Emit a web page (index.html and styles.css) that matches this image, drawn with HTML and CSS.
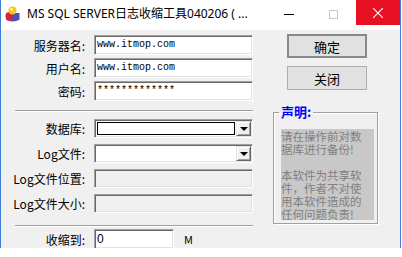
FILE: index.html
```html
<!DOCTYPE html>
<html lang="zh-CN">
<head>
  <meta charset="UTF-8">
  <title>MS SQL SERVER日志收缩工具</title>
  <link rel="stylesheet" href="styles.css">
</head>
<body>

<div class="window">
  <div class="titlebar">
    <svg class="app-icon" viewBox="0 0 17 17">
      <ellipse cx="8.5" cy="14" rx="6.5" ry="2.5" fill="#7a3f8f"/>
      <circle cx="5.5" cy="11" r="4" fill="#d8242a"/>
      <rect x="8.5" y="8" width="7" height="7" fill="#3d52c8"/>
      <circle cx="8.5" cy="5.5" r="4" fill="#f5c81c"/>
      <circle cx="7.5" cy="4.3" r="1.3" fill="#fff6b0"/>
    </svg>
    <span class="title">MS SQL SERVER日志收缩工具040206 ( ...</span>
    <span class="cap cap-min"><i></i></span>
    <span class="cap cap-max"><i></i></span>
    <span class="cap cap-close">
      <svg viewBox="0 0 10 10"><path d="M0 0L10 10M10 0L0 10" stroke="#fff" stroke-width="1.1"/></svg>
    </span>
  </div>

  <div class="client">
    <div class="form">
      <div class="row"><label>服务器名:</label><div class="edit">www.itmop.com</div></div>
      <div class="row"><label>用户名:</label><div class="edit">www.itmop.com</div></div>
      <div class="row"><label>密码:</label><div class="edit">*************</div></div>

      <div class="sep"></div>

      <div class="row row-sm">
        <label>数据库:</label>
        <div class="combo"><div class="face focus"></div><div class="drop"><b></b></div></div>
      </div>
      <div class="row row-sm">
        <label>Log文件:</label>
        <div class="combo"><div class="face"></div><div class="drop"><b></b></div></div>
      </div>
      <div class="row row-sm"><label>Log文件位置:</label><div class="edit disabled"></div></div>
      <div class="row row-sm"><label>Log文件大小:</label><div class="edit disabled"></div></div>

      <div class="sep sep-low"></div>

      <div class="row row-last">
        <label>收缩到:</label><div class="edit edit-short">0</div><span class="unit">M</span>
      </div>
    </div>

    <div class="side">
      <button class="btn btn-default">确定</button>
      <button class="btn">关闭</button>
      <fieldset class="group">
        <legend>声明:</legend>
        <div class="notice">
          <p>请在操作前对数</p>
          <p>据库进行备份!</p>
          <p class="gap">本软件为共享软</p>
          <p>件，作者不对使</p>
          <p>用本软件造成的</p>
          <p>任何问题负责!</p>
        </div>
      </fieldset>
    </div>
  </div>
</div>

</body>
</html>
```

FILE: styles.css
```css
body {
  margin: 0;
  background: #fff;
  font-family: "Noto Sans CJK SC", sans-serif;
  font-size: 12px;
  color: #000;
}

.window {
  width: 401px;
  height: 248px;
  box-sizing: border-box;
  border-left: 1px solid #3a7fd4;
  border-right: 1px solid #3a7fd4;
  overflow: hidden;
  display: flex;
  flex-direction: column;
}

/* title bar */
.titlebar {
  height: 30px;
  flex: none;
  background: #fff;
  display: flex;
  align-items: flex-start;
}

.app-icon {
  width: 17px;
  height: 17px;
  margin: 5px 0 0 3px;
}

.title {
  flex: 1;
  margin-left: 6px;
  font-family: "Noto Sans", "Noto Sans CJK SC", sans-serif;
  font-size: 12px;
  line-height: 28px;
  white-space: nowrap;
}

.cap {
  width: 45px;
  height: 25px;
  display: flex;
  align-items: center;
  justify-content: center;
}

.cap-min i {
  width: 10px;
  height: 1px;
  background: #000;
  margin-top: 3px;
}

.cap-max i {
  width: 9px;
  height: 9px;
  box-sizing: border-box;
  border: 1px solid #c8c8c8;
  margin-top: 3px;
}

.cap-close {
  width: 44px;
  background: #e81123;
}

.cap-close svg {
  width: 10px;
  height: 10px;
  margin-top: 1px;
}

/* client */
.client {
  flex: 1;
  background: #f0f0f0;
  display: flex;
}

.form {
  width: 252px;
  padding-top: 2px;
}

.row {
  display: flex;
  align-items: center;
  height: 20px;
  margin-top: 3px;
}

.row label {
  width: 84px;
  margin-right: 9px;
  text-align: right;
  white-space: nowrap;
}

.edit, .combo {
  width: 159px;
  height: 20px;
  box-sizing: border-box;
  border-top: 1px solid #a0a0a0;
  border-left: 1px solid #a0a0a0;
  border-right: 1px solid #fff;
  border-bottom: 1px solid #fff;
  box-shadow: inset 1px 1px 0 #696969, inset -1px -1px 0 #e3e3e3;
  background: #fff;
}

.edit {
  padding: 0 0 0 2px;
  font-family: "Liberation Mono", monospace;
  font-size: 10px;
  line-height: 18px;
}

.edit.disabled {
  background: #f0f0f0;
}

.edit-short {
  width: 80px;
  font-family: "Liberation Sans", sans-serif;
  font-size: 12px;
}

.unit {
  margin-left: 10px;
  font-size: 11px;
}

.row-sm {
  height: 19px;
  margin-top: 6px;
}

.row-sm .edit, .row-sm .combo {
  height: 19px;
}

.sep + .row-sm {
  margin-top: 7px;
}

.combo {
  display: flex;
  padding: 2px;
}

.face {
  flex: 1;
  margin-right: 1px;
}

.face.focus {
  border: 1px solid #000;
}

.drop {
  width: 15px;
  margin: -1px -1px -1px 0;
  box-sizing: border-box;
  background: #f0f0f0;
  border-top: 1px solid #e3e3e3;
  border-left: 1px solid #e3e3e3;
  border-right: 1px solid #696969;
  border-bottom: 1px solid #696969;
  box-shadow: inset 1px 1px 0 #fff, inset -1px -1px 0 #a0a0a0;
  display: flex;
  align-items: center;
  justify-content: center;
}

.drop b {
  width: 0;
  height: 0;
  border-left: 4px solid transparent;
  border-right: 4px solid transparent;
  border-top: 4px solid #000;
  margin-top: 1px;
}

.sep {
  margin: 9px 0 0 14px;
  height: 1px;
  background: #a0a0a0;
  border-bottom: 1px solid #fff;
}

.sep-low {
  margin-top: 12px;
}

.sep-low + .row {
  margin-top: 2px;
}

/* right side */
.side {
  display: flex;
  flex-direction: column;
  align-items: flex-start;
  padding-top: 4px;
}

.btn {
  width: 80px;
  height: 24px;
  margin: 0 0 0 34px;
  padding: 0;
  box-sizing: border-box;
  background: #e1e1e1;
  border: 1px solid #adadad;
  font-family: "Noto Sans CJK SC", sans-serif;
  font-size: 13px;
  color: #000;
}

.btn + .btn {
  margin-top: 8px;
}

.btn-default {
  border: 2px solid #8a8a8a;
}

.group {
  margin: 15px 0 0 20px;
  padding: 0 2px 3px 7px;
  width: 105px;
  box-sizing: border-box;
  border: 1px solid #a0a0a0;
  box-shadow: 1px 1px 0 #fff, inset 1px 1px 0 #fff;
}

.group legend {
  padding: 0 2px;
  margin-left: -2px;
  font-size: 13px;
  line-height: 14px;
  font-weight: bold;
  color: #0000ff;
}

.notice {
  margin-top: 10px;
  width: 93px;
  height: 91px;
  padding-top: 1px;
  box-sizing: border-box;
  background: #c8c8c8;
  color: #7f7f7f;
}

.notice p {
  margin: 0;
  font-size: 11.5px;
  line-height: 13px;
  white-space: nowrap;
}

.notice p.gap {
  margin-top: 13px;
}
```
